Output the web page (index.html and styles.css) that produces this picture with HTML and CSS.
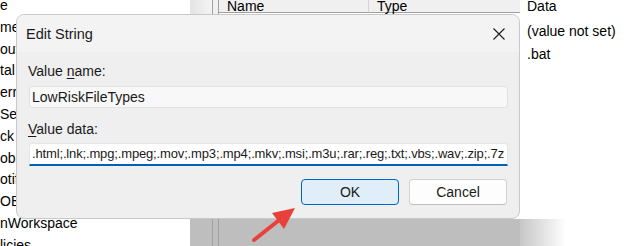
FILE: index.html
```html
<!DOCTYPE html>
<html>
<head>
<meta charset="utf-8">
<link rel="stylesheet" href="styles.css">
</head>
<body>
<div class="regedit">
  <div class="tree">
    <div class="tree-items">
      <div class="node">e</div>
      <div class="node">me</div>
      <div class="node">out</div>
      <div class="node">tal</div>
      <div class="node">err</div>
      <div class="node">Se</div>
      <div class="node">ck</div>
      <div class="node">obi</div>
      <div class="node">otif</div>
      <div class="node">OBI</div>
      <div class="node">nWorkspace</div>
      <div class="node">licies</div>
    </div>
    <div class="vscroll"><div class="shade-block"></div></div>
  </div>
  <div class="splitter"><div class="shade-block"></div></div>
  <div class="list">
    <div class="list-header">
      <div class="col col-name">Name</div>
      <div class="col col-type">Type</div>
      <div class="col col-data">Data</div>
    </div>
    <div class="list-row">
      <div class="cell cell-name"></div>
      <div class="cell cell-type"></div>
      <div class="cell cell-data">(value not set)</div>
    </div>
    <div class="list-row">
      <div class="cell cell-name"></div>
      <div class="cell cell-type"></div>
      <div class="cell cell-data">.bat</div>
    </div>
    <div class="list-bottom">
      <div class="shade-main"></div>
      <div class="shade-fade"></div>
    </div>
  </div>
</div>

<div class="dialog">
  <div class="dialog-title">
    <span class="title-text">Edit String</span>
    <svg class="close" width="12" height="12" viewBox="0 0 12 12"><path d="M0.5 0.5 L11.5 11.5 M11.5 0.5 L0.5 11.5" stroke="#1b1b1b" stroke-width="1.1" fill="none"/></svg>
  </div>
  <div class="dialog-body">
    <div class="label">Value <u>n</u>ame:</div>
    <div class="field field-readonly">LowRiskFileTypes</div>
    <div class="label label-data"><u>V</u>alue data:</div>
    <div class="field field-active"><span class="value">.html;.lnk;.mpg;.mpeg;.mov;.mp3;.mp4;.mkv;.msi;.m3u;.rar;.reg;.txt;.vbs;.wav;.zip;.7z</span><span class="caret"></span></div>
    <div class="buttons">
      <div class="btn btn-ok">OK</div>
      <div class="btn btn-cancel">Cancel</div>
    </div>
  </div>
</div>

<svg class="arrow" width="60" height="50" viewBox="0 0 60 50">
  <path d="M9 40 L38 17" stroke="#e8413c" stroke-width="4" stroke-linecap="round" fill="none"/>
  <polygon points="50,8 27,13 39,29" fill="#e8413c"/>
</svg>
</body>
</html>
```
FILE: styles.css
```css
html, body {
  margin: 0;
  padding: 0;
}
body {
  width: 642px;
  height: 246px;
  overflow: hidden;
  position: relative;
  background: #ffffff;
  font-family: "Liberation Sans", Arial, sans-serif;
  font-size: 14px;
  color: #000;
}
.regedit {
  display: flex;
  height: 246px;
}
.tree {
  display: flex;
  width: 212px;
  flex: none;
}
.tree-items {
  width: 190px;
  margin-top: -5px;
  overflow: hidden;
  background: #ffffff;
}
.node {
  height: 21.8px;
  line-height: 21.8px;
  white-space: nowrap;
}
.vscroll {
  width: 22px;
  display: flex;
  flex-direction: column;
  justify-content: flex-end;
  background: linear-gradient(to right, #e4e4e4, #f4f4f4);
}
.shade-block {
  height: 27px;
  background-color: #bebebe;
}
.splitter {
  width: 5px;
  flex: none;
  display: flex;
  flex-direction: column;
  justify-content: flex-end;
  border-left: 1px solid #a0a0a0;
  border-right: 1px solid #a0a0a0;
  background-color: #f0f0f0;
}
.list {
  flex: 1;
  display: flex;
  flex-direction: column;
}
.list-header {
  display: flex;
  height: 13px;
  line-height: 13px;
}
.col {
  padding-left: 8px;
  box-sizing: border-box;
}
.col-name {
  background: #f0f0f0;
  border-bottom: 1px solid #a0a0a0;
  border-right: 1px solid #d5d5d5;
}
.col-type {
  background: #f0f0f0;
  border-bottom: 1px solid #a0a0a0;
}
.col-name, .cell-name { width: 150px; }
.col-type, .cell-type { width: 151px; }
.col-data, .cell-data { padding-left: 7px; }
.list-row {
  display: flex;
  height: 23.3px;
  line-height: 23.3px;
}
.list-header + .list-row { margin-top: 7px; }
.cell { box-sizing: border-box; white-space: nowrap; }
.list-bottom {
  margin-top: auto;
  height: 27px;
  display: flex;
}
.shade-main {
  width: 301px;
  background-color: #bebebe;
}
.shade-fade {
  width: 46px;
  background: linear-gradient(to right, #c6c6c6, #ffffff);
}

.dialog {
  position: absolute;
  left: 16px;
  top: 14px;
  width: 504px;
  height: 205px;
  box-sizing: border-box;
  border: 1px solid #c9c9c9;
  border-radius: 8px;
  background: #efefef;
  overflow: hidden;
}
.dialog-title {
  height: 37px;
  background: #f3f3f3;
  display: flex;
  align-items: center;
  justify-content: space-between;
  padding: 0 14px 0 9px;
}
.title-text {
  font-size: 14.5px;
  color: #1a1a1a;
  margin-top: 1px;
}
.close {
  display: block;
}
.dialog-body {
  padding: 11px 11px 0 11px;
  display: flex;
  flex-direction: column;
}
.label {
  line-height: 16px;
  color: #1a1a1a;
}
.label u { text-decoration-thickness: 1px; text-underline-offset: 2px; }
.label-data { margin-top: 13px; }
.field {
  margin: 7px 0 0 1px;
  width: 479px;
  box-sizing: border-box;
  line-height: 20px;
  padding: 0 2px;
  white-space: nowrap;
  overflow: hidden;
}
.field-readonly {
  height: 22px;
  background: #f8f8f8;
  border: 1px solid #e2e2e2;
  border-radius: 3px;
  color: #1a1a1a;
}
.field-active {
  margin-top: 6px;
  height: 23px;
  background: #ffffff;
  border: 1px solid #e6e6e6;
  border-bottom: 2px solid #005fb8;
  border-radius: 3px 3px 0 0;
  display: flex;
  align-items: center;
}
.value {
  font-size: 13px;
  letter-spacing: -0.15px;
  color: #1a1a1a;
}
.caret {
  display: inline-block;
  width: 1px;
  height: 15px;
  background: #000;
  margin-left: 1px;
}
.buttons {
  display: flex;
  justify-content: flex-end;
  gap: 10px;
  margin-top: 13px;
  padding-right: 1px;
}
.btn {
  width: 98px;
  height: 26px;
  box-sizing: border-box;
  border-radius: 4px;
  text-align: center;
  line-height: 24px;
  color: #1a1a1a;
}
.btn-ok {
  background: #e0eef9;
  border: 1px solid #0067c0;
}
.btn-cancel {
  background: #fdfdfd;
  border: 1px solid #d1d1d1;
  border-bottom-color: #bdbdbd;
}
.arrow {
  position: absolute;
  left: 245px;
  top: 200px;
}
```
